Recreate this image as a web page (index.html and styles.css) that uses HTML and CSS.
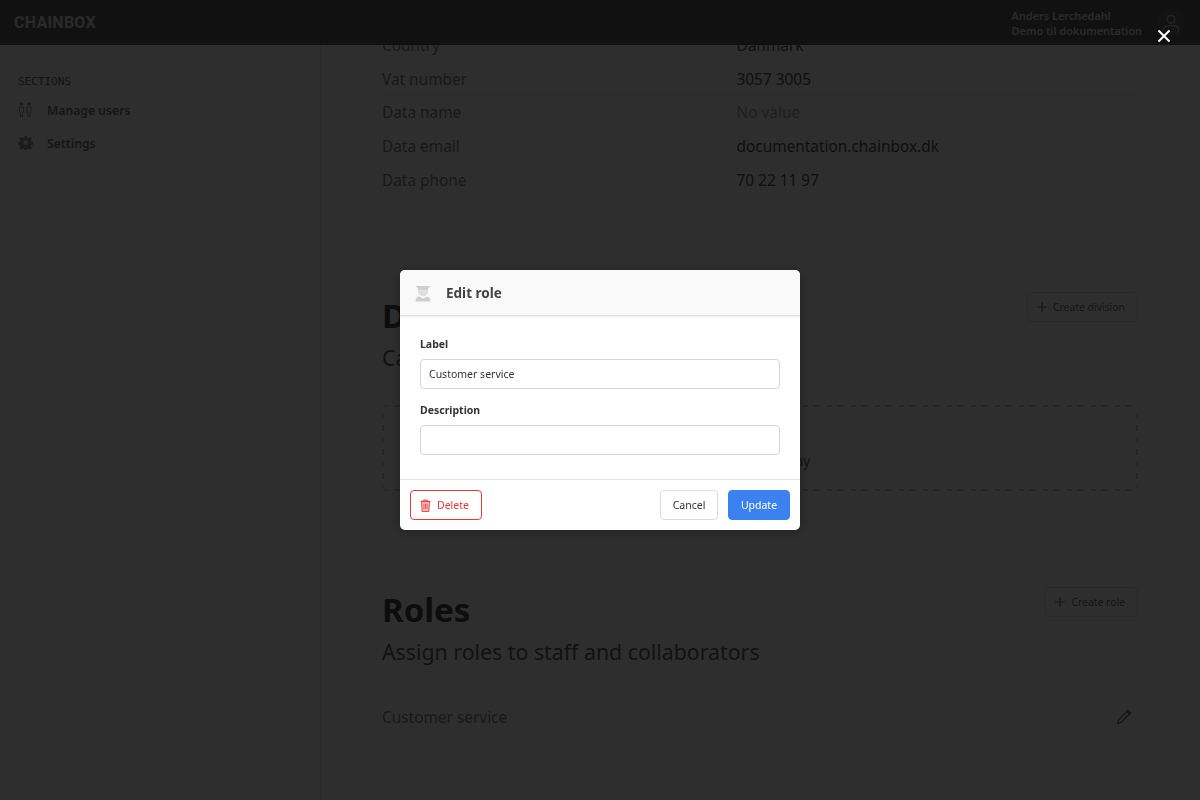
FILE: index.html
```
<!DOCTYPE html>
<html lang="en">
<head>
<meta charset="utf-8">
<title>Chainbox</title>
<link rel="stylesheet" href="styles.css">
</head>
<body>
<div class="app">
  <header class="topbar">
    <div class="logo">CHAINBOX</div>
    <div class="account">
      <div class="account-text"><div>Anders Lerchedahl</div><div>Demo til dokumentation</div></div>
      <div class="avatar">
        <svg width="22" height="22" viewBox="0 0 22 22" fill="none" stroke="currentColor" stroke-width="1.4"><circle cx="11" cy="7.500" r="3.800"/><path d="M3.500 19.500v-1.500c0-2.800 2-4.300 4.500-4.300h6c2.500 0 4.500 1.500 4.500 4.300v1.500"/></svg>
      </div>
    </div>
  </header>
  <div class="shell">
    <aside class="sidebar">
      <div class="side-title">SECTIONS</div>
      <nav class="side-nav">
        <a class="side-link">
          <svg class="side-icon" width="15" height="15" viewBox="0 0 15 15" fill="none" stroke="currentColor" stroke-width="1"><circle cx="3.500" cy="2" r="1.300" fill="currentColor"/><circle cx="11" cy="2" r="1.300" fill="currentColor"/><path d="M1.500 5h4v5h-.8v4.500h-2.400V10h-.8zM9 5h4v5h-.8v4.500H9.800V10H9z"/></svg>
          <span>Manage users</span>
        </a>
        <a class="side-link">
          <svg class="side-icon" width="15" height="15" viewBox="0 0 24 24" fill="currentColor"><path fill-rule="evenodd" d="M10 1h4l.6 3 2.200.9 2.600-1.700 2.800 2.800-1.700 2.600.9 2.200 3 .6v4l-3 .6-.9 2.200 1.700 2.600-2.800 2.800-2.600-1.700-2.200.9-.6 3h-4l-.6-3-2.200-.9-2.600 1.700-2.800-2.800 1.700-2.600-.9-2.200-3-.6v-4l3-.6.9-2.200-1.700-2.600 2.800-2.800 2.600 1.700 2.200-.9zM12 8.500a3.500 3.500 0 1 0 0 7 3.500 3.500 0 0 0 0-7z"/></svg>
          <span>Settings</span>
        </a>
      </nav>
    </aside>
    <main class="main">
      <section class="facts">
        <div class="fact"><span class="fact-key">Country</span><span class="fact-val">Danmark</span></div>
        <div class="fact"><span class="fact-key">Vat number</span><span class="fact-val">3057 3005</span></div>
        <div class="fact"><span class="fact-key">Data name</span><span class="fact-val fact-empty">No value</span></div>
        <div class="fact"><span class="fact-key">Data email</span><span class="fact-val">documentation.chainbox.dk</span></div>
        <div class="fact"><span class="fact-key">Data phone</span><span class="fact-val">70 22 11 97</span></div>
      </section>
      <section class="block block-divisions">
        <div class="block-head">
          <div>
            <h2 class="block-title">Divisions</h2>
            <p class="block-sub">Categorize staff and collaborators</p>
          </div>
          <button class="ghost-btn" type="button">
            <svg width="10" height="10" viewBox="0 0 10 10" stroke="currentColor" stroke-width="1.200"><path d="M5 0v10M0 5h10"/></svg>
            Create division
          </button>
        </div>
        <div class="empty">Nothing to display</div>
      </section>
      <section class="block block-roles">
        <div class="block-head">
          <div>
            <h2 class="block-title">Roles</h2>
            <p class="block-sub">Assign roles to staff and collaborators</p>
          </div>
          <button class="ghost-btn" type="button">
            <svg width="10" height="10" viewBox="0 0 10 10" stroke="currentColor" stroke-width="1.200"><path d="M5 0v10M0 5h10"/></svg>
            Create role
          </button>
        </div>
        <div class="role-row">
          <span>Customer service</span>
          <svg class="role-edit" width="16" height="16" viewBox="0 0 16 16" fill="none" stroke="currentColor" stroke-width="1.300"><path d="M1.700 14.300l.8-3.300 8.500-8.500 2.500 2.500-8.500 8.500z"/><path d="M11 2.500l1-1 2.500 2.500-1 1z" fill="currentColor"/></svg>
        </div>
      </section>
    </main>
  </div>
</div>

<div class="overlay"></div>
<svg class="close" width="14" height="14" viewBox="0 0 14 14" stroke="#fff" stroke-width="2"><path d="M1.500 1.500l11 11M12.500 1.500l-11 11"/></svg>

<div class="modal">
  <div class="modal-head">
    <svg width="16" height="18" viewBox="0 0 16 18" fill="#cfcfcf"><path d="M.5 2h15L13 4.500v2H3v-2z"/><path d="M3 7h10c0 3-2 5-5 5S3 10 3 7z" fill="#dedede"/><path d="M.5 17.500c0-3 1.500-4.500 3.500-5l4 2 4-2c2 .5 3.500 2 3.500 5z"/></svg>
    <span class="modal-title">Edit role</span>
  </div>
  <div class="modal-body">
    <label class="field">
      <span class="field-label">Label</span>
      <input class="field-input" type="text" value="Customer service">
    </label>
    <label class="field">
      <span class="field-label">Description</span>
      <input class="field-input" type="text" value="">
    </label>
  </div>
  <div class="modal-foot">
    <button class="btn btn-danger" type="button">
      <svg width="11" height="13" viewBox="0 0 12 14" fill="none" stroke="currentColor"><path d="M.5 2.500h11M4 2.500V1h4v1.500"/><path d="M1.700 2.500l.6 11h7.400l.6-11z" fill="currentColor" fill-opacity=".3"/><path d="M4.300 5v6M6 5v6M7.700 5v6" stroke-width=".8"/></svg>
      Delete
    </button>
    <div class="foot-right">
      <button class="btn btn-plain" type="button">Cancel</button>
      <button class="btn btn-primary" type="button">Update</button>
    </div>
  </div>
</div>
</body>
</html>
```

FILE: styles.css
```
* { box-sizing: border-box; }
html, body { margin: 0; height: 100%; overflow: hidden; }
body { font-family: "Noto Sans", "Open Sans", sans-serif; background: #fff; color: #555; }

.app { height: 800px; display: flex; flex-direction: column; overflow: hidden; }

.topbar {
  height: 45px; flex: none; position: relative; z-index: 2;
  background: #5f5f5f; color: #fff;
  display: flex; align-items: center; justify-content: space-between;
  padding: 0 15px 0 14px;
}
.logo { font-family: Roboto, sans-serif; font-weight: 700; font-size: 16px; letter-spacing: .25px; color: #e6e6e6; }
.account { display: flex; align-items: center; gap: 15px; }
.account-text { font-size: 10.900px; font-weight: 600; line-height: 15px; color: #e8e8e8; }
.avatar { width: 28px; height: 28px; border-radius: 50%; background: #6a6a6a; display: flex; align-items: center; justify-content: center; color: #bcbcbc; }

.shell { flex: 1; display: flex; min-height: 0; }
.sidebar { width: 321px; flex: none; border-right: 1px solid #e6e6e6; padding: 29px 18px 0; }
.side-title { font-family: "DejaVu Sans Mono", monospace; font-size: 11px; line-height: 16px; color: #707070; }
.side-nav { display: flex; flex-direction: column; margin-top: 4px; }
.side-link { display: flex; align-items: center; gap: 14px; height: 33px; font-size: 12.200px; font-weight: 600; color: #777; }
.side-icon { flex: none; color: #9a9a9a; margin-top: -2px; }

.main { flex: 1; min-width: 0; padding: 0 62px 0 61px; color: #666; }
.facts { margin-top: -16px; }
.fact { display: flex; height: 33.700px; align-items: center; font-size: 15.400px; border-bottom: 1px solid #f4f4f4; }
.fact:last-child { border-bottom: 0; }
.fact-key { width: 354.500px; flex: none; color: #888; }
.fact-val { color: #555; }
.fact-empty { color: #aaa; }

.block-divisions { margin-top: 95px; }
.block-roles { margin-top: 95px; }
.block-roles .ghost-btn { margin-top: 1px; }
.block-head { display: flex; justify-content: space-between; align-items: flex-start; }
.block-title { margin: 0; font-size: 33px; line-height: 48px; font-weight: 700; color: #4a4a4a; }
.block-sub { margin: 0; font-size: 21.300px; line-height: 36px; color: #666; }
.ghost-btn {
  font: inherit; font-size: 10.400px; color: #777; background: transparent;
  height: 30px; padding: 0 12px 0 9px; margin-top: 0;
  border: 1px solid #e2e2e2; border-radius: 4px;
  display: flex; align-items: center; gap: 6px;
}
.empty {
  height: 86px; margin-top: 29px; border-radius: 6px;
  background:
    repeating-linear-gradient(90deg, #d2d2d2 0 6px, transparent 6px 12px) top / 100% 2px no-repeat,
    repeating-linear-gradient(90deg, #d2d2d2 0 6px, transparent 6px 12px) bottom / 100% 2px no-repeat,
    repeating-linear-gradient(0deg, #d2d2d2 0 6px, transparent 6px 12px) left / 2px 100% no-repeat,
    repeating-linear-gradient(0deg, #d2d2d2 0 6px, transparent 6px 12px) right / 2px 100% no-repeat;
  display: flex; align-items: center; justify-content: center;
  font-size: 13.500px; color: #666; padding: 26px 16px 0 0;
}
.role-row { display: flex; align-items: center; justify-content: space-between; margin-top: 30px; height: 34px; font-size: 15.400px; color: #888; padding-right: 6px; }
.role-edit { color: #777; }

.overlay { position: fixed; inset: 0; background: rgba(0, 0, 0, .82); z-index: 10; }
.close { position: fixed; top: 29px; left: 1157px; z-index: 11; }

.modal {
  position: fixed; z-index: 12; left: 400px; top: 270px; width: 400px; height: 260px;
  background: #fff; border-radius: 5px; overflow: hidden;
  display: flex; flex-direction: column;
  box-shadow: 0 2px 12px rgba(0, 0, 0, .3);
}
.modal-head {
  height: 46px; flex: none; background: #f9f9f9; border-bottom: 1px solid #dcdcdc;
  box-shadow: 0 1px 2px rgba(0, 0, 0, .08);
  display: flex; align-items: center; gap: 15px; padding: 0 15px;
}
.modal-title { font-size: 13.500px; font-weight: 700; color: #444; }
.modal-body { flex: 1; padding: 21px 20px 0; display: flex; flex-direction: column; gap: 14px; }
.field { display: block; }
.field-label { display: block; font-size: 10.500px; font-weight: 700; line-height: 15px; color: #333; margin-bottom: 7px; }
.field-input {
  display: block; width: 100%; height: 30px; padding: 0 8px;
  font: inherit; font-size: 10.500px; color: #333;
  border: 1px solid #d4d4d4; border-radius: 4px; background: #fff; outline: none;
}
.modal-foot {
  height: 51px; flex: none; border-top: 1px solid #e2e2e2;
  display: flex; align-items: center; justify-content: space-between; padding: 0 10px;
}
.foot-right { display: flex; gap: 10px; }
.btn { font: inherit; font-size: 10.500px; height: 30px; border-radius: 4px; background: #fff; display: flex; align-items: center; justify-content: center; }
.btn-danger { width: 72px; gap: 6px; padding: 0 0 0 9px; justify-content: flex-start; color: #e53935; border: 1px solid #e53935; }
.btn-plain { width: 58px; color: #333; border: 1px solid #dcdcdc; }
.btn-primary { width: 62px; color: #fff; background: #3b82f0; border: 1px solid #3b82f0; }
```
